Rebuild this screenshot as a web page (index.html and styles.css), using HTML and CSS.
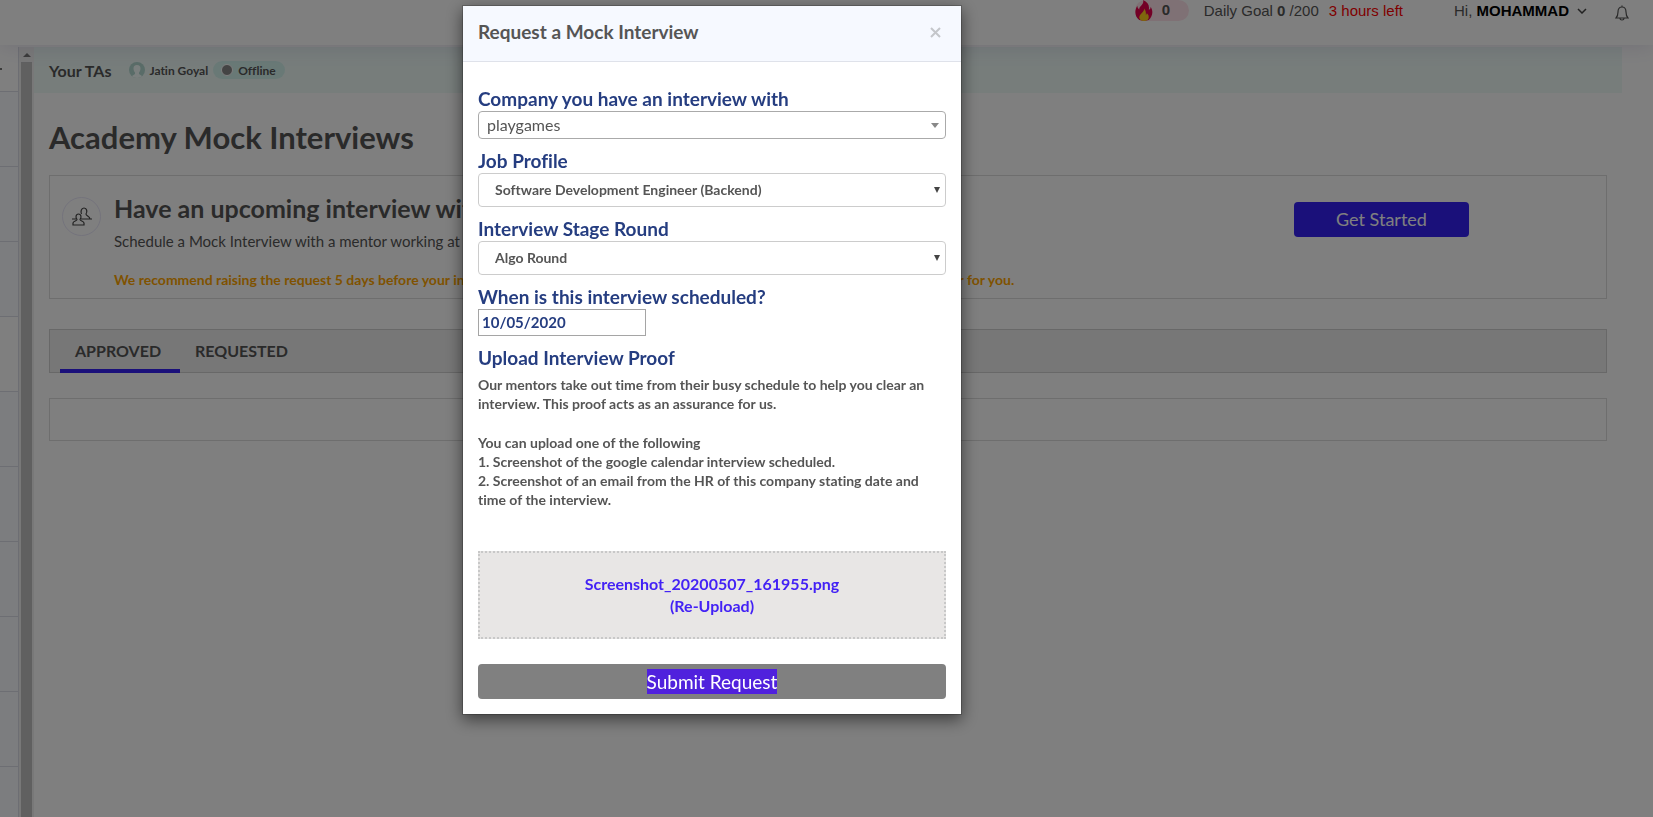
FILE: index.html
```html
<!DOCTYPE html>
<html lang="en">
<head>
<meta charset="utf-8">
<title>Academy Mock Interviews</title>
<link rel="stylesheet" href="styles.css">
</head>
<body>
<header class="topbar">
  <div class="streak">
    <svg class="flame" viewBox="0 0 18 22" aria-hidden="true"><path fill="#e6004c" d="M8 0c1 3-1 5-3 7-1 1-1 2-1 3C3 9 2 8 2 6-1 11-1 17 4 21l5 1 5-1c4-4 5-9 2-14 0 2-1 3-2 3 1-4-1-8-6-10z"/><path fill="#ffcf1a" d="M9 9c1 3-4 5-5 9 0 2 2 4 5 4s5-2 5-4c0-2-1-3-2-4l-1 2c0-3 0-5-2-7z"/></svg>
    <b>0</b>
  </div>
  <div class="goal"><span>Daily Goal <b>0</b> /200</span><span class="time-left">3 hours left</span></div>
  <button class="user" type="button"><span>Hi, <b>MOHAMMAD</b></span>
    <svg width="10" height="6" viewBox="0 0 10 6" aria-hidden="true"><path d="M1 1l4 4 4-4" fill="none" stroke="#444" stroke-width="1.5"/></svg>
  </button>
  <button class="bell" type="button" aria-label="Notifications">
    <svg width="14" height="16" viewBox="0 0 14 16" aria-hidden="true"><path d="M1 13h12c-2-2-2-3-2-6 0-3-1-5-4-5S3 4 3 7c0 3 0 4-2 6zM5 13.500c0 2 4 2 4 0M7 2V.5" fill="none" stroke="#555" stroke-width="1.200"/></svg>
  </button>
</header>
<div class="shell">
  <nav class="sidebar">
    <div class="side-item first"><i class="dash"></i></div>
    <div class="side-item"></div><div class="side-item"></div><div class="side-item"></div>
    <div class="side-item active"></div>
    <div class="side-item"></div><div class="side-item"></div><div class="side-item"></div>
    <div class="side-item"></div><div class="side-item"></div><div class="side-item"></div>
  </nav>
  <div class="scroll-track"><i class="scroll-up"></i><i class="scroll-thumb"></i></div>
  <main class="main">
    <div class="tas">
      <span class="tas-title">Your TAs</span>
      <svg class="avatar" viewBox="0 0 16 16" aria-hidden="true"><defs><clipPath id="round"><circle cx="8" cy="8" r="8"/></clipPath></defs><g clip-path="url(#round)"><path fill="#b3d8d0" d="M0 0h16v16H0z"/><path fill="#f5fffc" d="M8 3c2.500 0 3.500 1.500 3.500 3.500S10.500 10 10 10.500v1.500l3 2v2H3v-2l3-2v-1.500C5.500 10 4.500 8.500 4.500 6.500S5.500 3 8 3z"/></g></svg>
      <span class="ta-name">Jatin Goyal</span>
      <span class="status"><i></i>Offline</span>
    </div>
    <div class="content">
      <h1>Academy Mock Interviews</h1>
      <section class="card promo">
        <div class="promo-icon">
          <svg width="20" height="19" viewBox="0 0 20 19" fill="none" stroke="#444" stroke-width="1.200" aria-hidden="true"><path d="M1 18v-2c0-2 4-2 4-3.500C3.500 11 3.500 7 6.500 7S9.500 11 8 12.500C8 14 12 14 12 16v2zM0 12h4M9 12h11M9.500 7C8.500 5 9 1 12 1s3.500 4 2 6c0 2 4 2 4 5"/></svg>
        </div>
        <div class="promo-text">
          <h2>Have an upcoming interview with a company?</h2>
          <p>Schedule a Mock Interview with a mentor working at the same company.</p>
          <p class="notice">We recommend raising the request 5 days before your interview date so that we can then allot the most suitable and experienced mentor for you.</p>
        </div>
        <button class="start" type="button">Get Started</button>
      </section>
      <div class="tabs">
        <button class="tab selected" type="button">APPROVED</button>
        <button class="tab" type="button">REQUESTED</button>
      </div>
      <div class="card empty"></div>
    </div>
  </main>
</div>
<div class="overlay">
  <form class="modal" role="dialog" aria-labelledby="modal-title">
    <div class="modal-head">
      <h3 id="modal-title">Request a Mock Interview</h3>
      <button class="close" type="button" aria-label="Close"><svg width="11" height="11" viewBox="0 0 11 11" aria-hidden="true"><path d="M1 1l9 9M10 1l-9 9" stroke="#c4c6ca" stroke-width="2"/></svg></button>
    </div>
    <div class="modal-body">
      <label class="label" for="company">Company you have an interview with</label>
      <div class="select-box slim">
        <select id="company"><option>playgames</option></select>
        <svg width="8" height="5" viewBox="0 0 8 5" aria-hidden="true"><path d="M0 0h8L4 5z" fill="#888"/></svg>
      </div>
      <label class="label" for="profile">Job Profile</label>
      <div class="select-box">
        <select id="profile"><option>Software Development Engineer (Backend)</option></select>
        <svg width="6" height="6" viewBox="0 0 6 6" aria-hidden="true"><path d="M0 0h6L3 6z" fill="#444"/></svg>
      </div>
      <label class="label" for="round-type">Interview Stage Round</label>
      <div class="select-box">
        <select id="round-type"><option>Algo Round</option></select>
        <svg width="6" height="6" viewBox="0 0 6 6" aria-hidden="true"><path d="M0 0h6L3 6z" fill="#444"/></svg>
      </div>
      <label class="label" for="date">When is this interview scheduled?</label>
      <input class="date" id="date" type="text" value="10/05/2020">
      <div class="label">Upload Interview Proof</div>
      <div class="help">
        <p>Our mentors take out time from their busy schedule to help you clear an interview. This proof acts as an assurance for us.</p>
        <p>You can upload one of the following<br>1. Screenshot of the google calendar interview scheduled.<br>2. Screenshot of an email from the HR of this company stating date and time of the interview.</p>
      </div>
      <button class="upload" type="button">Screenshot_20200507_161955.png<br>(Re-Upload)</button>
      <button class="submit" type="submit"><span>Submit Request</span></button>
    </div>
  </form>
</div>
</body>
</html>
```
FILE: styles.css
```css
* { box-sizing: border-box; }
body {
  margin: 0;
  height: 100vh;
  overflow: hidden;
  display: flex;
  flex-direction: column;
  background: #fff;
  color: #555;
  font-family: Lato, "Open Sans", sans-serif;
  font-size: 16px;
  font-variant-ligatures: none;
}
h1, h2, h3, p { margin: 0; }
button, input, select { font: inherit; font-variant-ligatures: none; color: inherit; border: 0; background: none; padding: 0; margin: 0; }
button { cursor: pointer; }

.topbar {
  height: 45px;
  flex: none;
  display: flex;
  justify-content: flex-end;
  align-items: center;
  padding: 0 24px 24px 0;
  background: #fff;
  box-shadow: 0 2px 20px rgba(80, 70, 140, .15);
  z-index: 1;
  font: 15px/20px "Liberation Sans", Arial, sans-serif;
}
.streak { display: flex; gap: 9px; width: 54px; height: 21px; border-radius: 12px; background: #ffe3ea; }
.flame { width: 18px; height: 21px; }
.goal { display: flex; gap: 10px; margin-left: 15px; }
.time-left { color: #f00; }
.user { display: flex; align-items: center; gap: 8px; margin-left: 51px; }
.user b { color: #000; }
.bell { margin-left: 28px; display: flex; padding-top: 4px; }

.shell { flex: 1; min-height: 0; display: flex; padding-top: 2px; }
.sidebar { width: 19px; flex: none; overflow: hidden; border-right: 1px solid #dadde6; background: #f8fbff; }
.side-item { height: 75px; border-bottom: 1px solid #dadde6; }
.side-item.first { height: 45px; padding-top: 21px; background: #fff; }
.side-item.active { background: #fff; }
.dash { display: block; width: 2px; height: 2px; background: #777; }
.scroll-track { width: 15px; flex: none; display: flex; flex-direction: column; padding: 6px 2px 0; background: #f1f1f1; }
.scroll-up { align-self: center; border: 4px solid transparent; border-top: 0; border-bottom-color: #777; }
.scroll-thumb { flex: 1; margin-top: 5px; background: #c1c1c1; }
.main { flex: 1; min-width: 0; margin-right: 31px; }

.tas { display: flex; align-items: center; height: 46px; padding: 0 15px; background: #eefaf7; font-weight: 700; font-size: 12px; }
.tas-title { font-size: 16px; margin-right: 18px; }
.avatar { width: 16px; height: 16px; margin-right: 4px; }
.ta-name { margin-right: 5px; }
.status { display: flex; align-items: center; gap: 5px; height: 18px; padding: 0 9px 0 8px; border-radius: 9px; background: #d3f3ed; }
.status i { width: 12px; height: 12px; border: 1px solid #fff; border-radius: 50%; background: #888; }

.content { padding: 26px 15px 0; }
h1 { font-size: 31px; line-height: 36px; margin-bottom: 20px; }
.card { border: 1px solid #dcdcdc; }
.promo { display: flex; align-items: flex-start; height: 124px; }
.promo-icon { display: flex; align-items: center; justify-content: center; width: 39px; height: 39px; margin: 21px 13px 0 12px; border: 1px solid #e8e6f8; border-radius: 50%; }
.promo-text { flex: 1; padding-top: 17px; white-space: nowrap; }
h2 { font-size: 25px; line-height: 30px; }
.promo-text p { font-size: 15px; line-height: 20px; margin-top: 8px; }
.promo-text .notice { color: #ffa500; font-size: 14px; font-weight: 700; margin-top: 19px; }
.start { width: 175px; height: 35px; margin: 26px 137px 0 0; padding-bottom: 2px; border-radius: 4px; background: #3420f5; color: #fff; font-size: 18px; }
.tabs { display: flex; height: 44px; margin: 30px 0 25px; padding-left: 10px; border: 1px solid #d0d0d0; background: #efefef; }
.tab { min-width: 120px; padding: 0 15px 2px; font-size: 16px; font-weight: 700; text-align: left; color: #555; }
.tab.selected { border-bottom: 4px solid #3420f5; padding: 1px 15px 0; margin-bottom: -1px; }
.empty { height: 43px; }

.overlay {
  position: fixed;
  inset: 0;
  z-index: 2;
  display: flex;
  justify-content: center;
  align-items: flex-start;
  padding: 5px 229px 0 0;
  background: rgba(0, 0, 0, .5);
}
.modal { width: 500px; border: 1px solid rgba(0, 0, 0, .2); background: #fff; background-clip: padding-box; box-shadow: 0 5px 15px rgba(0, 0, 0, .5); }
.modal-head { display: flex; justify-content: space-between; align-items: center; height: 56px; padding: 0 20px 3px 15px; border-bottom: 1px solid #dfe2ea; background: #f6f9ff; }
h3 { font-size: 19px; line-height: 24px; }
.close { display: flex; }
.modal-body { padding: 15px; display: flex; flex-direction: column; font-weight: 700; }
.label { margin-top: 10px; color: #253d80; font-size: 19px; line-height: 24px; }
.select-box { display: grid; align-items: center; }
.select-box > * { grid-area: 1 / 1; }
.select-box svg { justify-self: end; margin-right: 6px; pointer-events: none; }
.select-box select { appearance: none; width: 100%; height: 34px; padding: 0 16px 2px; border: 1px solid #ccc; border-radius: 4px; font-size: 14px; }
.slim select { height: 28px; padding: 0 8px 2px; border-color: #aaa; font-size: 16px; font-weight: 400; }
.slim svg { margin-right: 7px; }
.date { width: 168px; height: 27px; padding: 0 4px 2px 3px; border: 1px solid #a5a5a5; color: #253d80; font-size: 15px; }
.help { margin-top: 5px; font-size: 14px; line-height: 19px; }
.help p + p { margin-top: 20px; }
.upload { height: 88px; margin-top: 42px; border: 2px dotted #c8c8c8; background: #e8e6e5; color: #4322f5; font-size: 16px; font-weight: 700; line-height: 22px; }
.submit { height: 35px; margin-top: 25px; border-radius: 4px; background: #808080; color: #fff; font-size: 19px; font-weight: 400; }
.submit span { display: inline-block; line-height: 25px; background: #5021dd; }
```
